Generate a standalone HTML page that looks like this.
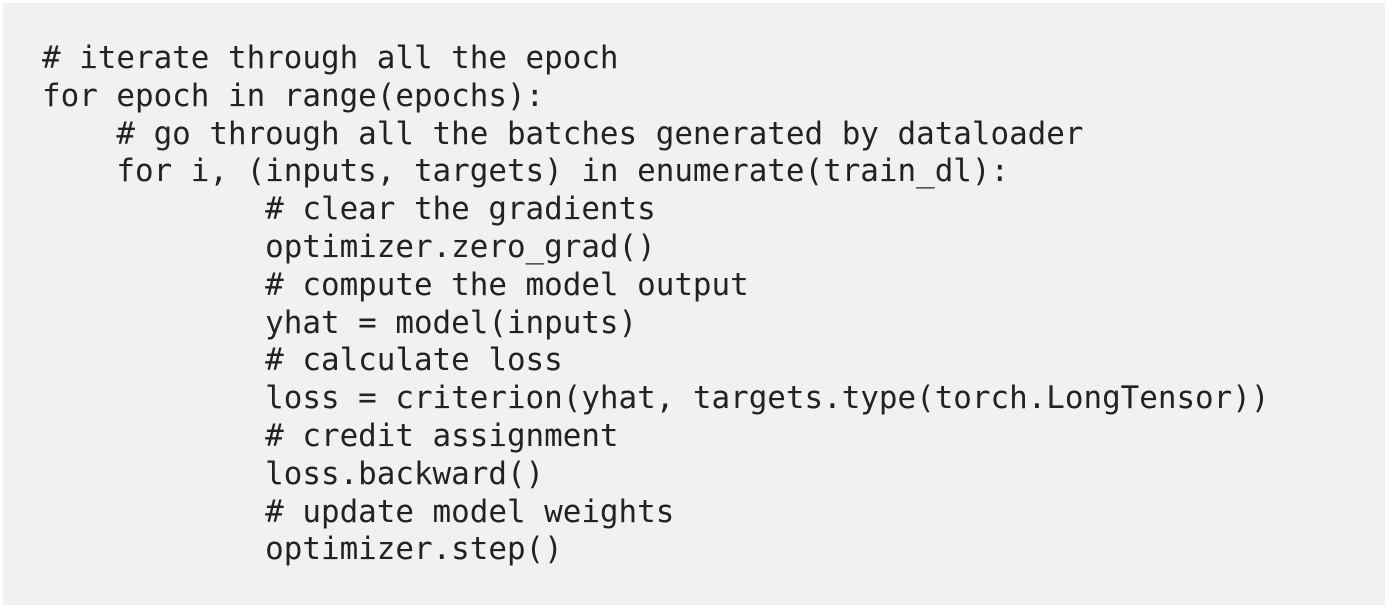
<!DOCTYPE html>
<html><head><meta charset="utf-8"><style>
html,body{margin:0;padding:0;background:#fff;width:1388px;height:612px;overflow:hidden}
.box{position:absolute;left:3px;top:3px;width:1382px;height:602px;background:#f1f1f1}
pre{position:absolute;left:39px;top:37px;margin:0;font-family:"DejaVu Sans Mono","Liberation Mono",monospace;font-size:30.9px;line-height:37.8px;color:#222}
</style></head><body><div class="box"><pre># iterate through all the epoch
for epoch in range(epochs):
    # go through all the batches generated by dataloader
    for i, (inputs, targets) in enumerate(train_dl):
            # clear the gradients
            optimizer.zero_grad()
            # compute the model output
            yhat = model(inputs)
            # calculate loss
            loss = criterion(yhat, targets.type(torch.LongTensor))
            # credit assignment
            loss.backward()
            # update model weights
            optimizer.step()</pre></div></body></html>
